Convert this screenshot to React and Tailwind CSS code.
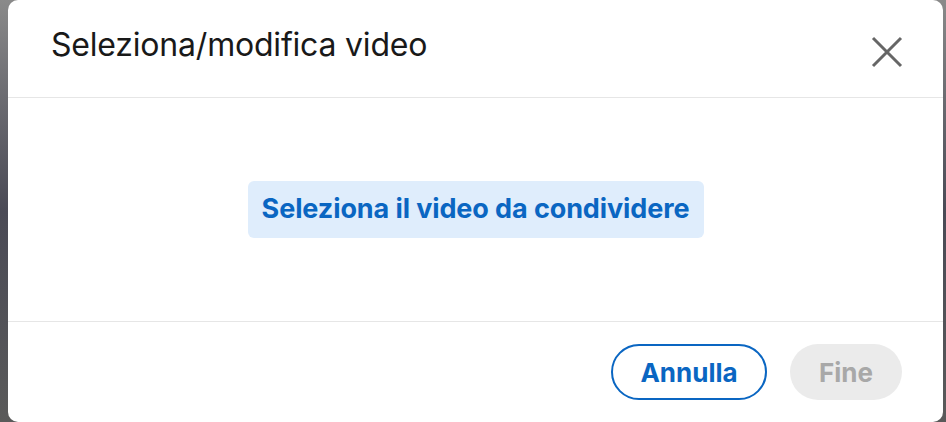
import React from 'react';

function CloseIcon() {
  return (
    <svg width="32" height="32" viewBox="0 0 32 32" fill="none">
      <path d="M2 2L30 30M30 2L2 30" stroke="#666666" strokeWidth="3" />
    </svg>
  );
}

export default function App() {
  return (
    <div className="flex h-[422px] w-[946px] bg-gradient-to-b from-[#8a8a8a] via-[#4a4a55] to-[#5a5a5a] font-['Inter',sans-serif]">
      <div className="ml-[8px] mr-[3px] flex flex-1 flex-col rounded-[10px] bg-white">
        {/* header */}
        <div className="flex h-[98px] items-center justify-between border-b border-[#e6e6e6] pl-[43px] pr-[40px]">
          <h2 className="-mt-[7px] text-[32px] font-normal tracking-[-0.2px] text-[#191919]">Seleziona/modifica video</h2>
          <button className="mt-[6px] flex h-[32px] w-[32px] items-center justify-center">
            <CloseIcon />
          </button>
        </div>
        {/* body */}
        <div className="flex h-[224px] items-center justify-center border-b border-[#e6e6e6]">
          <button className="h-[57px] w-[456px] rounded-[6px] bg-[#dfedfc] text-[27px] font-bold tracking-[-0.1px] text-[#0a66c2]">
            Seleziona il video da condividere
          </button>
        </div>
        {/* footer */}
        <div className="flex flex-1 items-center justify-end gap-[23px] pr-[41px]">
          <button className="h-[56px] w-[156px] rounded-full border-2 border-[#0a66c2] text-[26px] font-bold text-[#0a66c2]">
            Annulla
          </button>
          <button className="h-[56px] w-[112px] rounded-full bg-[#ebebeb] text-[26px] font-bold text-[#a8a8a8]">
            Fine
          </button>
        </div>
      </div>
    </div>
  );
}
